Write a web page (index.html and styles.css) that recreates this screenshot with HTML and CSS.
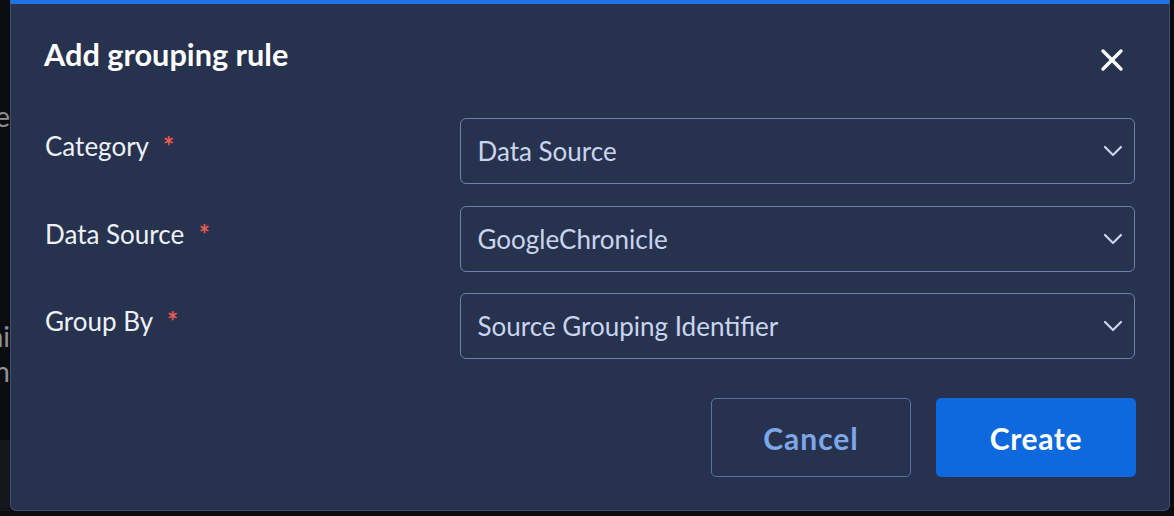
FILE: index.html
```html
<!DOCTYPE html>
<html lang="en">
<head>
<meta charset="utf-8">
<title>Add grouping rule</title>
<link rel="stylesheet" href="styles.css">
</head>
<body>
<div class="page">
  <aside class="bg-col">
    <div class="bg-line bg-line-first"><span>Rule type</span></div>
    <div class="bg-line bg-line-second"><span>Domaini</span></div>
    <div class="bg-line"><span>Common</span></div>
    <div class="bg-footer"></div>
  </aside>
</div>

<div class="modal" role="dialog" aria-labelledby="modal-title">
  <header class="modal-header">
    <h1 id="modal-title" class="modal-title">Add grouping rule</h1>
    <button class="close-btn" aria-label="Close">
      <svg width="24" height="24" viewBox="0 0 24 24" aria-hidden="true">
        <path d="M3 3 L21 21 M21 3 L3 21" fill="none" stroke="#ffffff" stroke-width="3.4" stroke-linecap="round"/>
      </svg>
    </button>
  </header>

  <form class="form">
    <label class="field-label">Category <span class="req">*</span></label>
    <div class="select">
      <span class="select-value">Data Source</span>
      <svg class="chevron" width="20" height="12" viewBox="0 0 20 12" aria-hidden="true">
        <path d="M2 2 L10 10 L18 2" fill="none" stroke="#c9d5ee" stroke-width="2.2" stroke-linecap="round" stroke-linejoin="round"/>
      </svg>
    </div>

    <label class="field-label">Data Source <span class="req">*</span></label>
    <div class="select">
      <span class="select-value">GoogleChronicle</span>
      <svg class="chevron" width="20" height="12" viewBox="0 0 20 12" aria-hidden="true">
        <path d="M2 2 L10 10 L18 2" fill="none" stroke="#c9d5ee" stroke-width="2.2" stroke-linecap="round" stroke-linejoin="round"/>
      </svg>
    </div>

    <label class="field-label">Group By <span class="req">*</span></label>
    <div class="select">
      <span class="select-value">Source Grouping Identifier</span>
      <svg class="chevron" width="20" height="12" viewBox="0 0 20 12" aria-hidden="true">
        <path d="M2 2 L10 10 L18 2" fill="none" stroke="#c9d5ee" stroke-width="2.2" stroke-linecap="round" stroke-linejoin="round"/>
      </svg>
    </div>
  </form>

  <footer class="modal-footer">
    <button class="btn btn-cancel">Cancel</button>
    <button class="btn btn-create">Create</button>
  </footer>
</div>
</body>
</html>
```

FILE: styles.css
```css
* {
  box-sizing: border-box;
}

html, body {
  margin: 0;
  padding: 0;
}

body {
  width: 1174px;
  height: 516px;
  overflow: hidden;
  background: #0b0c10;
  font-family: "Lato", "Liberation Sans", sans-serif;
  position: relative;
}

/* background page (mostly covered by the dialog) */
.page {
  display: flex;
  height: 516px;
}

.bg-col {
  width: 10px;
  display: flex;
  flex-direction: column;
  padding-top: 99px;
}

.bg-line {
  display: flex;
  justify-content: flex-end;
  width: 10px;
  white-space: nowrap;
  font-size: 28px;
  line-height: 35px;
  color: #8d9097;
}

.bg-line-first {
  line-height: 34px;
}

.bg-line-second {
  margin-top: 186px;
}

.bg-footer {
  margin-top: 51px;
  height: 71px;
  width: 10px;
  background: #15171d;
}

/* dialog */
.modal {
  position: absolute;
  left: 10px;
  top: 0;
  width: 1160px;
  height: 511px;
  background: #26324e;
  border: 1px solid #3e4f74;
  border-top: 4px solid #1f74e3;
  border-radius: 0 0 6px 6px;
  padding: 33px 34px 33px 34px;
  display: flex;
  flex-direction: column;
}

.modal-header {
  display: flex;
  justify-content: space-between;
  align-items: flex-start;
  height: 46px;
}

.modal-title {
  margin: 0 0 0 -1px;
  font-size: 30.7px;
  line-height: 36px;
  font-weight: 700;
  color: #ffffff;
}

.close-btn {
  width: 46px;
  height: 46px;
  padding: 0;
  border: none;
  background: transparent;
  display: flex;
  align-items: center;
  justify-content: center;
  cursor: pointer;
}

.form {
  margin: 35px 0 0 0;
  display: grid;
  grid-template-columns: 415px 1fr;
  row-gap: 21.5px;
}

.field-label {
  padding-top: 12px;
  font-size: 26px;
  line-height: 32px;
  color: #eef1f7;
}

.req {
  color: #ec5a52;
  font-size: 26px;
  font-weight: 700;
  margin-left: 8px;
}

.select {
  height: 66px;
  border: 1.5px solid #6d81ac;
  border-radius: 6px;
  display: flex;
  align-items: center;
  justify-content: space-between;
  padding: 0 11px 0 16.5px;
}

.select-value {
  font-size: 26px;
  line-height: 32px;
  color: #c9d5ee;
}

.chevron {
  display: block;
}

.modal-footer {
  margin-top: 39px;
  display: flex;
  justify-content: flex-end;
  gap: 25px;
  margin-right: -1px;
}

.btn {
  width: 200px;
  height: 79px;
  border-radius: 5px;
  font-family: "Lato", "Liberation Sans", sans-serif;
  font-size: 30px;
  font-weight: 700;
  letter-spacing: 1px;
  cursor: pointer;
}

.btn-cancel {
  background: transparent;
  border: 1.5px solid #5d72a1;
  color: #7ea7e9;
}

.btn-create {
  background: #0e68de;
  border: none;
  color: #ffffff;
  letter-spacing: 0.6px;
}
```
